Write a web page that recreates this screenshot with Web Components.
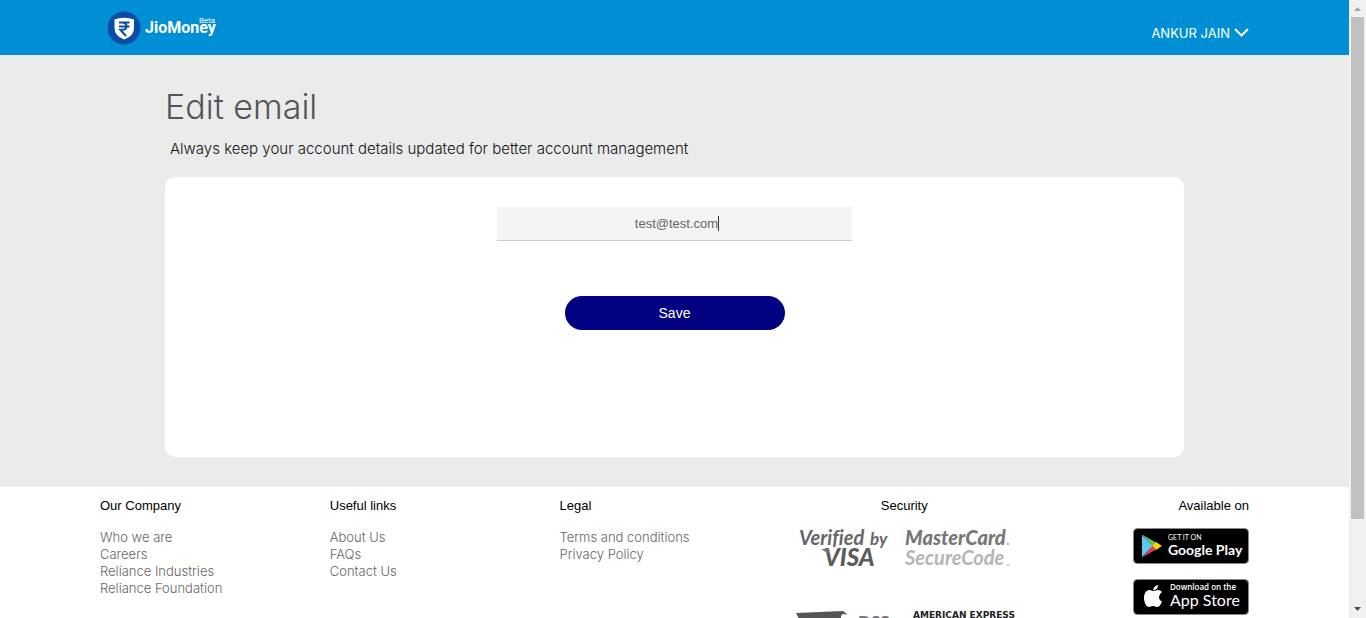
<!DOCTYPE html>
<html lang="en">
<head>
<meta charset="utf-8">
<title>JioMoney - Edit email</title>
<style>
  body { margin: 0; font-family: Inter, "Liberation Sans", sans-serif; font-weight: 300; }
</style>
</head>
<body>
<jm-app>
  <jm-header slot="header" user="ANKUR JAIN"></jm-header>
  <jm-main>
    <span slot="title">Edit email</span>
    <span slot="hint">Always keep your account details updated for better account management</span>
    <jm-email-form value="test@test.com"></jm-email-form>
  </jm-main>
  <jm-footer>
    <jm-links heading="Our Company">
      <a href="#who">Who we are</a><a href="#careers">Careers</a><a href="#industries">Reliance Industries</a><a href="#foundation">Reliance Foundation</a>
    </jm-links>
    <jm-links heading="Useful links">
      <a href="#about">About Us</a><a href="#faqs">FAQs</a><a href="#contact">Contact Us</a>
    </jm-links>
    <jm-links heading="Legal">
      <a href="#terms">Terms and conditions</a><a href="#privacy">Privacy Policy</a>
    </jm-links>
    <jm-security></jm-security>
    <jm-stores></jm-stores>
  </jm-footer>
</jm-app>

<script>
function define(name, html, setup) {
  customElements.define(name, class extends HTMLElement {
    connectedCallback() {
      if (this.shadowRoot) return;
      const root = this.attachShadow({ mode: 'open' });
      root.innerHTML = html;
      if (setup) setup(this, root);
    }
  });
}

define('jm-app', `
  <style>
    :host { display: flex; height: 100vh; overflow: hidden; background: #fff; }
    .page { flex: 1; min-width: 0; overflow: hidden; }
  </style>
  <div class="page"><slot name="header"></slot><slot></slot></div>
  <jm-scrollbar></jm-scrollbar>`);

define('jm-scrollbar', `
  <style>
    :host { display: flex; flex-direction: column; flex: none; width: 17px; background: #f1f1f1; }
    svg { display: block; flex: none; width: 17px; height: 17px; }
    .track { flex: 1; padding: 0 2px; }
    .thumb { height: 86%; background: #c1c1c1; }
  </style>
  <svg viewBox="0 0 17 17"><path d="M5 11h7L8.500 7z" fill="#a3a3a3"/></svg>
  <div class="track"><div class="thumb"></div></div>
  <svg viewBox="0 0 17 17"><path d="M5 6h7L8.500 10z" fill="#505050"/></svg>`);

define('jm-header', `
  <style>
    :host { display: flex; justify-content: space-between; align-items: center; box-sizing: border-box;
      height: 55px; padding: 0 100px; background: #008fd5; color: #fff; }
    .logo { display: block; margin-left: 8px; }
    button { display: flex; align-items: center; gap: 4px; margin-top: 10px; padding: 0; border: 0;
      background: none; color: inherit; font: 13px/20px Inter, "Liberation Sans", sans-serif; }
  </style>
  <a href="#home" aria-label="JioMoney home">
    <svg class="logo" width="112" height="36" viewBox="0 0 112 36">
      <circle cx="16" cy="18" r="16.500" fill="#0a4da2"/>
      <path d="M6.500 9.500Q16 6 26 9.500V18Q26 26 16.200 29.500Q6.500 26 6.500 18Z" fill="#fff"/>
      <path d="M11 12.500H21.500M11 16.500H21.500M14 12.500Q18.500 12.500 18.500 16.500Q18.500 20 12.500 20L18 26" fill="none" stroke="#0a4da2" stroke-width="2"/>
      <text x="37" y="23" font-family="Roboto, sans-serif" font-size="16" font-weight="700" fill="#fff">JioMoney</text>
      <text x="91" y="13" font-family="Roboto, sans-serif" font-size="8" font-weight="400" fill="#fff">Beta</text>
    </svg>
  </a>
  <button type="button"><span></span>
    <svg width="15" height="10" viewBox="0 0 15 10"><path d="M1 1L7.500 7.500L14 1" fill="none" stroke="#fff" stroke-width="2"/></svg>
  </button>`,
  (el, root) => { root.querySelector('span').textContent = el.getAttribute('user'); });

define('jm-main', `
  <style>
    :host { display: block; padding: 32px 165px 30px; background: #ebebeb; }
    h1 { margin: 0; font-size: 34px; line-height: 40px; font-weight: 300; color: #555; }
    p { margin: 12px 0 18px 5px; font-size: 15px; line-height: 20px; color: #111; }
    section { box-sizing: border-box; min-height: 280px; padding: 30px; border-radius: 10px; background: #fff; }
  </style>
  <h1><slot name="title"></slot></h1>
  <p><slot name="hint"></slot></p>
  <section><slot></slot></section>`);

define('jm-email-form', `
  <style>
    :host { display: block; }
    form { display: flex; flex-direction: column; align-items: center; gap: 55px; }
    input { box-sizing: border-box; width: 355px; height: 34px; padding: 0 0 0 4px; border: 0;
      border-bottom: 1px solid #ccc; border-radius: 0; outline: 0; text-align: center; color: #666;
      font: 13px "Liberation Sans", sans-serif; caret-color: transparent;
      background: linear-gradient(#333, #333) calc(50% + 44px) 50% / 1px 15px no-repeat #f4f4f4; }
    button { width: 220px; height: 34px; border: 0; border-radius: 17px; background: #000080; color: #fff;
      font: 14px "Liberation Sans", sans-serif; }
  </style>
  <form>
    <input type="email" aria-label="Email address">
    <button type="button">Save</button>
  </form>`,
  (el, root) => { root.querySelector('input').value = el.getAttribute('value'); });

define('jm-footer', `
  <style>
    :host { display: grid; grid-template-columns: repeat(5, 1fr); padding: 10px 100px; background: #fff; }
  </style>
  <slot></slot>`);

define('jm-links', `
  <style>
    :host { display: block; }
    h2 { margin: 0 0 15px; font: 13px/17px "Liberation Sans", sans-serif; color: #000; }
    nav { display: flex; flex-direction: column; align-items: flex-start; }
    ::slotted(a) { font-size: 13px; line-height: 17px; color: #666; text-decoration: none; }
  </style>
  <h2></h2><nav><slot></slot></nav>`,
  (el, root) => { root.querySelector('h2').textContent = el.getAttribute('heading'); });

define('jm-security', `
  <style>
    :host { display: block; text-align: center; }
    h2 { margin: 0 0 10px; font: 13px/17px "Liberation Sans", sans-serif; color: #000; }
    svg { display: block; margin: 0 auto; }
    text { font-family: Lato, sans-serif; font-variant-ligatures: none; }
  </style>
  <h2>Security</h2>
  <svg width="230" height="130" viewBox="0 0 230 130">
    <g font-style="italic">
      <text x="10" y="21" font-size="20" font-weight="700" fill="#666">Verified</text>
      <text x="81" y="21" font-size="17" font-weight="700" fill="#666">by</text>
      <text x="35" y="42" font-size="24" font-weight="900" fill="#5c5c5c">VISA</text>
      <text x="116" y="21" font-size="20" font-weight="900" fill="#777">MasterCard</text>
      <text x="116" y="41" font-size="20" font-weight="700" fill="#b5b5b5">SecureCode</text>
    </g>
    <path d="M32 25L39 25L40 30Z" fill="#777"/>
    <circle cx="219" cy="20" r="1" fill="#999"/>
    <path d="M217 41h4" stroke="#bbb"/>
    <path d="M7 89L54 87L58 90L54 94L56 112L20 114Z" fill="#555"/>
    <circle cx="55" cy="93" r="3" fill="#fff"/>
    <text x="69" y="104" font-size="17" font-weight="900" fill="#777">DSS</text>
    <text x="124" y="94" style="font-family:'DejaVu Sans',sans-serif" font-size="9" font-weight="700" fill="#222">AMERICAN EXPRESS</text>
  </svg>`);

define('jm-stores', `
  <style>
    :host { display: flex; flex-direction: column; align-items: flex-end; }
    h2 { margin: 0 0 14px; font: 13px/17px "Liberation Sans", sans-serif; color: #000; }
    a { display: block; margin-bottom: 15px; }
    svg { display: block; }
    text { fill: #fff; font-family: Lato, sans-serif; font-weight: 400; }
  </style>
  <h2>Available on</h2>
  <a href="#play">
    <svg width="116" height="36" viewBox="0 0 116 36">
      <rect x=".5" y=".5" width="115" height="35" rx="4" fill="#000" stroke="#888"/>
      <path d="M9 7L20 18L9 29Z" fill="#5bc9f4"/><path d="M9 6.500L23 14.500L19.500 18Z" fill="#6abf69"/>
      <path d="M23 14L29 18L23 22L19 18Z" fill="#ffd500"/><path d="M9 29.500L23 21.500L19.500 18Z" fill="#ee3a4b"/>
      <text x="35" y="12" font-size="7">GET IT ON</text>
      <text x="35" y="27" font-size="14" style="font-weight:700">Google Play</text>
    </svg>
  </a>
  <a href="#appstore">
    <svg width="116" height="36" viewBox="0 0 116 36">
      <rect x=".5" y=".5" width="115" height="35" rx="4" fill="#000" stroke="#888"/>
      <path d="M20 11C21 8 22.500 6.500 25 6C25 9 23 11 20 11ZM20 12C22 12 23 11 25 11Q27.500 11 29 13Q26 15 26 18Q26 21 29 22.500Q27 28 24 28C22.500 28 22 27 20 27C18 27 17.500 28 16 28C13 28 11 23 11 19C11 14 13.500 11 16.500 11C18 11 19 12 20 12Z" fill="#fff"/>
      <text x="37" y="11" font-size="8" style="font-family:'Open Sans',sans-serif;font-weight:600">Download on the</text>
      <text x="37" y="27" font-size="16">App Store</text>
    </svg>
  </a>`);
</script>
</body>
</html>
